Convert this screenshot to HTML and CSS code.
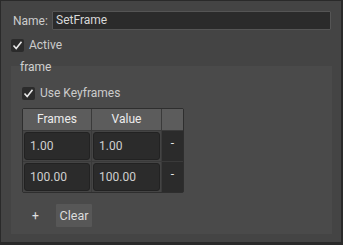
FILE: index.html
```html
<!DOCTYPE html>
<html>
<head>
<meta charset="utf-8">
<link rel="stylesheet" href="styles.css">
</head>
<body>
<div class="panel">
  <div class="name-row">
    <span class="label">Name:</span>
    <div class="field">SetFrame</div>
  </div>
  <div class="check-row active-row">
    <span class="box"><svg width="13" height="13" viewBox="0 0 13 13"><path d="M2.5 6.5 L5.2 9.5 L10.5 2.8" fill="none" stroke="#e8e8e8" stroke-width="1.6"/></svg></span>
    <span class="check-label">Active</span>
  </div>
  <div class="group-title">frame</div>
  <div class="group">
    <div class="check-row keys-row">
      <span class="box"><svg width="13" height="13" viewBox="0 0 13 13"><path d="M2.5 6.5 L5.2 9.5 L10.5 2.8" fill="none" stroke="#e8e8e8" stroke-width="1.6"/></svg></span>
      <span class="check-label">Use Keyframes</span>
    </div>
    <div class="table">
      <div class="th">Frames</div>
      <div class="th">Value</div>
      <div class="th"></div>
      <div class="td"><div class="cell">1.00</div></div>
      <div class="td"><div class="cell">1.00</div></div>
      <div class="td del">-</div>
      <div class="td"><div class="cell">100.00</div></div>
      <div class="td"><div class="cell">100.00</div></div>
      <div class="td del">-</div>
    </div>
    <div class="actions">
      <span class="plus">+</span>
      <span class="btn">Clear</span>
    </div>
  </div>
</div>
</body>
</html>
```
FILE: styles.css
```css
* { box-sizing: border-box; }
html, body { margin: 0; padding: 0; }
body {
  background: #2a2a2a;
  width: 343px;
  height: 245px;
  overflow: hidden;
  font-family: Roboto, "Noto Sans", sans-serif;
  font-size: 12px;
  color: #d0d0d0;
}
.panel {
  margin: 1px;
  width: 340px;
  height: 241px;
  background: #444444;
  padding: 10px 10px 0 10px;
  display: flex;
  flex-direction: column;
}
.name-row {
  display: flex;
  align-items: center;
  height: 19px;
}
.label { width: 41px; padding-left: 2px; color: #cccccc; }
.field {
  flex: 1;
  height: 19px;
  background: #2b2b2b;
  border: 1px solid #555;
  border-radius: 1px;
  padding-left: 3px;
  line-height: 17px;
  font-size: 12px;
  color: #d8d8d8;
}
.check-row { display: flex; align-items: center; }
.active-row { margin-top: 8px; height: 14px; }
.box {
  width: 13px;
  height: 13px;
  background: #2b2b2b;
  border-radius: 2px;
  display: block;
}
.box svg { display: block; }
.check-label { margin-left: 5px; font-size: 12px; color: #cccccc; }
.group-title {
  margin-top: 9px;
  margin-left: 9px;
  height: 12px;
  line-height: 12px;
  position: relative;
  z-index: 1;
}
.group {
  margin-top: -7px;
  width: 321px;
  height: 168px;
  background: #4a4a4a;
  padding: 20px 0 0 11px;
}
.keys-row { height: 14px; }
.table {
  margin-top: 8px;
  width: 162px;
  display: grid;
  grid-template-columns: 68px 69px 21px;
  grid-template-rows: 21px 30px 30px;
  gap: 1px;
  background: #3a3a3a;
  border: 1px solid #2e2e2e;
  border-radius: 2px;
}
.th {
  background: #5c5c5c;
  color: #ececec;
  text-align: center;
  line-height: 21px;
  font-size: 12px;
}
.td { background: #444; padding: 1px; }
.cell {
  height: 28px;
  background: #2b2b2b;
  border: 1px solid #222;
  border-radius: 3px;
  padding-left: 5px;
  line-height: 26px;
  color: #cfcfcf;
}
.td.del {
  background: #2b2b2b;
  text-align: center;
  line-height: 22px;
  color: #e8e8e8;
}
.actions {
  display: flex;
  align-items: center;
  margin-top: 11px;
  height: 23px;
}
.plus { margin-left: 10px; width: 24px; font-size: 12px; color: #e0e0e0; }
.btn {
  width: 36px;
  height: 23px;
  background: #575757;
  color: #dddddd;
  text-align: center;
  line-height: 23px;
  font-size: 12.5px;
  border-radius: 1px;
}
```
